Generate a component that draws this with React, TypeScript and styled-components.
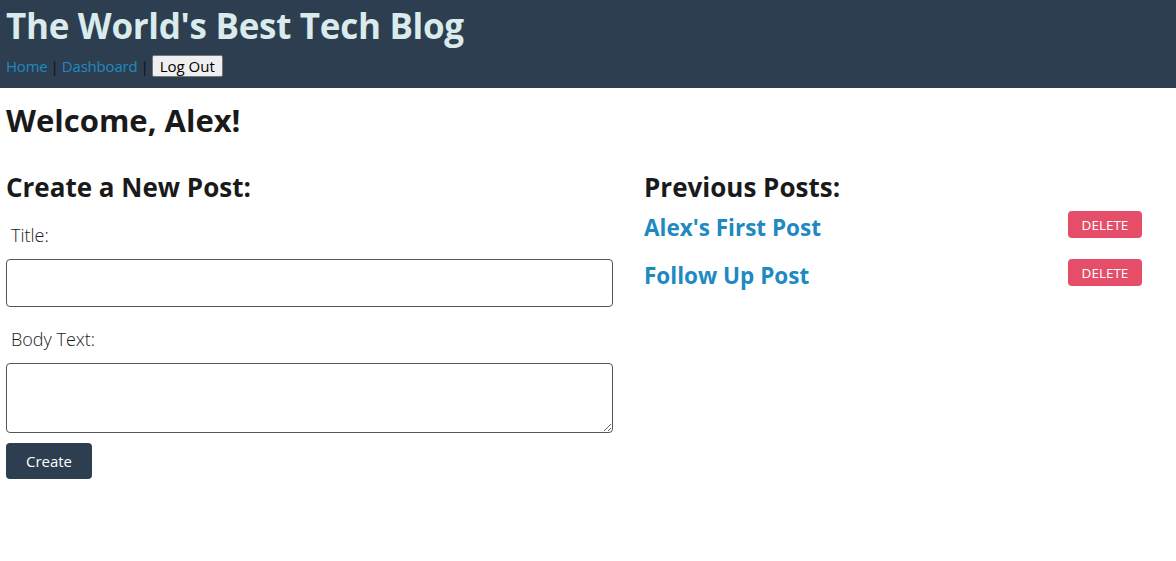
import React from 'react';
import styled, { createGlobalStyle } from 'styled-components';

const GlobalStyle = createGlobalStyle`
    body {
        margin: 0;
        background: #ffffff;
        color: #1a1a1a;
        font-family: 'Open Sans', 'Noto Sans', sans-serif;
    }
`;

const colors = {
    navy: '#2d3e50',
    link: '#2089c1',
    danger: '#e54d68',
    title: '#d9ebeb',
};

const Header = styled.header`
    background: ${colors.navy};
    height: 88px;
    padding: 0 6px;
    box-sizing: border-box;
`;

const SiteTitle = styled.h1`
    margin: 0;
    padding-top: 2px;
    font-size: 35px;
    line-height: 48px;
    font-weight: 700;
    color: ${colors.title};
    letter-spacing: -0.3px;
`;

const Nav = styled.nav`
    display: flex;
    align-items: center;
    gap: 3px;
    margin-top: 5px;
    font-size: 15px;
`;

const NavLink = styled.a`
    color: ${colors.link};
    text-decoration: none;
    letter-spacing: -0.2px;
`;

const Pipe = styled.span`
    color: #111;
`;

const LogOutButton = styled.button`
    font-family: inherit;
    font-size: 15px;
    padding: 0 7px;
    height: 22px;
    background: #efefef;
    color: #000;
    border: 1px solid #767676;
    border-radius: 2px;
`;

const Main = styled.main`
    padding: 0 6px;
`;

const Welcome = styled.h2`
    margin: 0;
    padding-top: 10px;
    font-size: 31px;
    line-height: 44px;
    font-weight: 700;
`;

const Columns = styled.div`
    display: grid;
    grid-template-columns: 607px 1fr;
    column-gap: 31px;
    margin-top: 25px;
`;

const SectionHeading = styled.h3`
    margin: 0;
    font-size: 26px;
    line-height: 40px;
    font-weight: 700;
`;

const Form = styled.form`
    display: flex;
    flex-direction: column;
`;

const Label = styled.label<{ $top: number }>`
    font-size: 18px;
    font-weight: 300;
    padding-left: 5px;
    margin-top: ${p => p.$top}px;
    margin-bottom: 12px;
    line-height: 24px;
`;

const TextInput = styled.input`
    height: 48px;
    box-sizing: border-box;
    border: 1px solid #555;
    border-radius: 4px;
    font-family: inherit;
    font-size: 16px;
`;

const TextArea = styled.textarea`
    height: 70px;
    box-sizing: border-box;
    border: 1px solid #555;
    border-radius: 4px;
    font-family: inherit;
    font-size: 16px;
    resize: vertical;
`;

const CreateButton = styled.button`
    align-self: flex-start;
    margin-top: 10px;
    width: 86px;
    height: 36px;
    background: ${colors.navy};
    color: #fff;
    border: none;
    border-radius: 4px;
    font-family: inherit;
    font-size: 15px;
`;

const PostsColumn = styled.section`
    padding-right: 28px;
`;

const PostRow = styled.div`
    display: flex;
    align-items: center;
    justify-content: space-between;
    height: 48px;
    &:first-of-type {
        margin-top: -4px;
    }
`;

const PostLink = styled.a`
    color: ${colors.link};
    font-size: 22.5px;
    font-weight: 700;
    text-decoration: none;
`;

const DeleteButton = styled.button`
    width: 74px;
    height: 27px;
    background: ${colors.danger};
    color: #fff;
    border: none;
    border-radius: 4px;
    font-family: inherit;
    font-size: 13.5px;
    text-transform: uppercase;
    align-self: flex-start;
    margin-top: 8px;
`;

const posts = ["Alex's First Post", 'Follow Up Post'];

export default function App() {
    return (
        <>
            <GlobalStyle />
            <Header>
                <SiteTitle>The World's Best Tech Blog</SiteTitle>
                <Nav>
                    <NavLink href="#">Home</NavLink>
                    <Pipe>|</Pipe>
                    <NavLink href="#">Dashboard</NavLink>
                    <Pipe>|</Pipe>
                    <LogOutButton>Log Out</LogOutButton>
                </Nav>
            </Header>
            <Main>
                <Welcome>Welcome, Alex!</Welcome>
                <Columns>
                    <Form onSubmit={e => e.preventDefault()}>
                        <SectionHeading>Create a New Post:</SectionHeading>
                        <Label $top={16}>Title:</Label>
                        <TextInput type="text" />
                        <Label $top={20}>Body Text:</Label>
                        <TextArea />
                        <CreateButton type="submit">Create</CreateButton>
                    </Form>
                    <PostsColumn>
                        <SectionHeading>Previous Posts:</SectionHeading>
                        {posts.map(title => (
                            <PostRow key={title}>
                                <PostLink href="#">{title}</PostLink>
                                <DeleteButton>delete</DeleteButton>
                            </PostRow>
                        ))}
                    </PostsColumn>
                </Columns>
            </Main>
        </>
    );
}
